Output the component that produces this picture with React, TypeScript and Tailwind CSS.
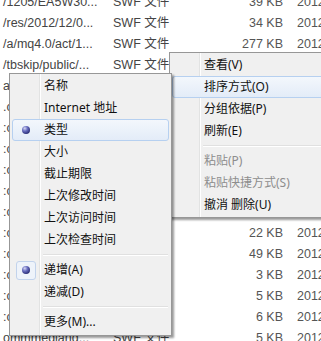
const rows = [
  { name: '/1205/EA5W30...', size: '39 KB' },
  { name: '/res/2012/12/0...', size: '34 KB' },
  { name: '/a/mq4.0/act/1...', size: '277 KB' },
  { name: '/tbskip/public/...', size: '12 KB' },
  { name: 'a/tbskip/img/...', size: '8 KB' },
  { name: '.c/res/2012/12...', size: '16 KB' },
  { name: ':c/flash/ad/...', size: '9 KB' },
  { name: ':c/flash/ad/...', size: '4 KB' },
  { name: ':c/flash/ad/...', size: '7 KB' },
  { name: ':c/flash/ad/...', size: '11 KB' },
  { name: ':c/flash/ad/...', size: '2 KB' },
  { name: ':c/flash/ad/...', size: '22 KB' },
  { name: ':c/flash/ad/...', size: '49 KB' },
  { name: ':c/flash/ad/...', size: '3 KB' },
  { name: ':c/flash/ad/...', size: '5 KB' },
  { name: ':c/flash/ad/...', size: '6 KB' },
  { name: 'ommmediand...', size: '5 KB' },
]

type Item =
  | { sep: true }
  | { sep?: false; label: string; checked?: boolean; active?: boolean; disabled?: boolean }

const viewMenu: Item[] = [
  { label: '查看(V)' },
  { label: '排序方式(O)', active: true },
  { label: '分组依据(P)' },
  { label: '刷新(E)' },
  { sep: true },
  { label: '粘贴(P)', disabled: true },
  { label: '粘贴快捷方式(S)', disabled: true },
  { label: '撤消 删除(U)' },
]

const sortMenu: Item[] = [
  { label: '名称' },
  { label: 'Internet 地址' },
  { label: '类型', checked: true, active: true },
  { label: '大小' },
  { label: '截止期限' },
  { label: '上次修改时间' },
  { label: '上次访问时间' },
  { label: '上次检查时间' },
  { sep: true },
  { label: '递增(A)', checked: true },
  { label: '递减(D)' },
  { sep: true },
  { label: '更多(M)...' },
]

function Bullet() {
  return (
    <span className="block w-[8px] h-[8px] rounded-full bg-[radial-gradient(circle_at_35%_30%,#d6d9f5_0%,#6a6fc0_35%,#2b2f78_75%,#1c1f55_100%)]" />
  )
}

function Menu({ items }: { items: Item[] }) {
  return (
    <div className="relative h-full border border-[#979797] bg-[#f0f0f0] py-[1px] px-[2px] shadow-[2px_2px_2px_rgba(0,0,0,0.4)]">
      {/* icon gutter */}
      <div className="absolute top-0 bottom-0 left-[29px] w-[2px] border-l border-[#e2e3e3]">
        <div className="absolute top-0 bottom-0 left-0 w-px bg-white" />
      </div>
      {items.map((it, i) =>
        it.sep ? (
          <div key={i} className="h-[8px] flex items-center pl-[31px] pr-[1px]">
            <div className="w-full h-[2px] border-t border-[#e0e0e0] bg-white" />
          </div>
        ) : (
          <div
            key={i}
            className={`relative h-[22px] flex items-center rounded-[3px] border ${
              it.active
                ? 'border-[#b6d0f0] bg-[linear-gradient(#f3f7fc,#e3ecf8)]'
                : 'border-transparent'
            }`}
          >
            <div className="w-[24px] h-[20px] ml-[1px] flex items-center justify-center">
              {it.checked && (
                <div
                  className={`w-[20px] h-[19px] flex items-center justify-center rounded-[3px] ${
                    it.active ? '' : 'border border-[#c2d3ec] bg-[#eef3fa]'
                  }`}
                >
                  <Bullet />
                </div>
              )}
            </div>
            <span
              className={`pl-[6px] whitespace-nowrap text-[12px] leading-none ${
                it.disabled ? 'text-[#8d8d8d]' : 'text-[#111]'
              }`}
            >
              {it.label}
            </span>
          </div>
        )
      )}
    </div>
  )
}

export default function App() {
  return (
    <div
      className="relative w-[321px] h-[341px] overflow-hidden bg-white"
      style={{ fontFamily: '"Noto Sans", "Noto Sans CJK SC", sans-serif' }}
    >
      <div
        className="-mt-[8px] text-[12.5px] text-[#444]"
        style={{ fontFamily: '"Liberation Sans", "Noto Sans CJK SC", sans-serif' }}
      >
        {rows.map((r, i) => (
          <div key={i} className="h-[21px] flex items-center whitespace-nowrap">
            <div className="w-[113px] shrink-0 pl-[3px] overflow-hidden">{r.name}</div>
            <div className="w-[60px] shrink-0">SWF 文件</div>
            <div className="w-[110px] shrink-0 text-right text-[#555]">{r.size}</div>
            <div className="shrink-0 pl-[14px] text-[#555]">2012/12/14 10:21</div>
          </div>
        ))}
      </div>

      <div className="absolute left-[169px] top-[52px] w-[160px] h-[166px]">
        <Menu items={viewMenu} />
      </div>
      <div className="absolute left-[9px] top-[73px] w-[163px] h-[263px]">
        <Menu items={sortMenu} />
      </div>
    </div>
  )
}
